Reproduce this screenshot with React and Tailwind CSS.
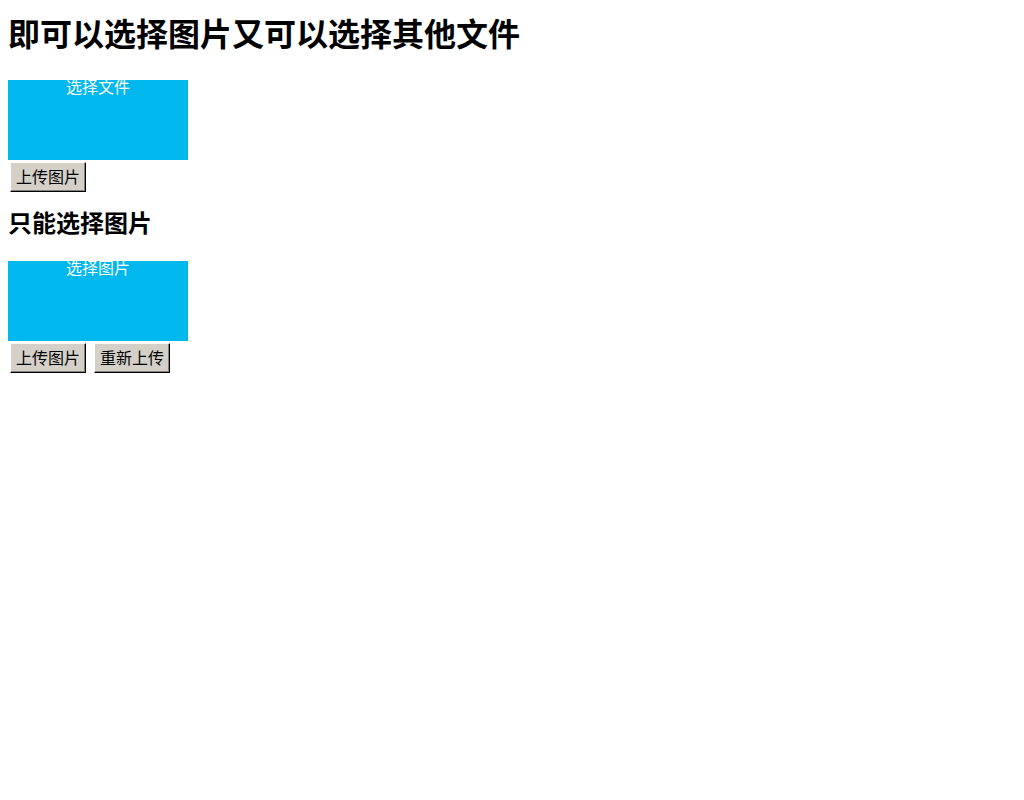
const BTN =
  "m-[2px] flex h-[30px] w-[76px] items-center justify-center border border-t-white border-l-white border-r-black border-b-black bg-[#d4d0c8] pb-[3px] text-base leading-none text-black shadow-[inset_-1px_-1px_0_#808080]";

function Picker({ label }) {
  return (
    <div className="h-[80px] w-[180px] bg-[#00b7ee] text-center text-base leading-[13px] text-white">
      {label}
    </div>
  );
}

export default function App() {
  return (
    <div className="m-2 font-['Noto_Sans_CJK_SC',sans-serif] text-black">
      <h1 className="mt-[14px] mb-[29px] text-[32px] font-bold leading-[37px]">
        即可以选择图片又可以选择其他文件
      </h1>
      <Picker label="选择文件" />
      <div className="flex">
        <button className={BTN}>上传图片</button>
      </div>

      <h2 className="mt-[14px] mb-[25px] text-2xl font-bold leading-[28px]">只能选择图片</h2>
      <Picker label="选择图片" />
      <div className="flex gap-1">
        <button className={BTN}>上传图片</button>
        <button className={BTN}>重新上传</button>
      </div>
    </div>
  );
}
